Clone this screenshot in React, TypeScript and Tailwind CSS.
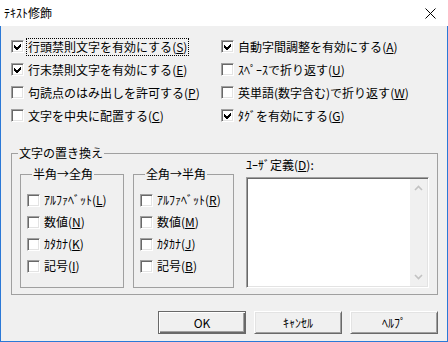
import React from "react";

type Item = { text: string; key: string; tail?: string; checked?: boolean; focus?: boolean };

const topItems: Item[] = [
  { text: "行頭禁則文字を有効にする", key: "S", checked: true, focus: true },
  { text: "自動字間調整を有効にする", key: "A", checked: true },
  { text: "行末禁則文字を有効にする", key: "E", checked: true },
  { text: "ｽﾍﾟｰｽで折り返す", key: "U" },
  { text: "句読点のはみ出しを許可する", key: "P" },
  { text: "英単語(数字含む)で折り返す", key: "W" },
  { text: "文字を中央に配置する", key: "C" },
  { text: "ﾀｸﾞを有効にする", key: "G", checked: true },
];

const toFull: Item[] = [
  { text: "ｱﾙﾌｧﾍﾞｯﾄ", key: "L" },
  { text: "数値", key: "N" },
  { text: "ｶﾀｶﾅ", key: "K" },
  { text: "記号", key: "I" },
];

const toHalf: Item[] = [
  { text: "ｱﾙﾌｧﾍﾞｯﾄ", key: "R" },
  { text: "数値", key: "M" },
  { text: "ｶﾀｶﾅ", key: "J" },
  { text: "記号", key: "B" },
];

function Box({ checked }: { checked?: boolean }) {
  return (
    <span className="flex h-[13px] w-[13px] shrink-0 items-center justify-center border border-t-[#a0a0a0] border-l-[#a0a0a0] border-r-white border-b-white bg-white shadow-[inset_1px_1px_0_#696969,inset_-1px_-1px_0_#e3e3e3]">
      {checked && (
        <svg width="9" height="9" viewBox="0 0 9 9" shapeRendering="crispEdges">
          <polygon points="1,3 3.5,5.5 8,1 8,4 3.5,8.5 1,6" fill="#000" />
        </svg>
      )}
    </span>
  );
}

function Label({ item }: { item: Item }) {
  return (
    <>
      {item.text}(<u className="underline-offset-[1px]">{item.key}</u>)
    </>
  );
}

function Check({ item, h }: { item: Item; h: string }) {
  return (
    <div className={`flex items-center ${h}`}>
      <Box checked={item.checked} />
      <span
        className={`ml-[4px] whitespace-nowrap leading-[14px] ${
          item.focus ? "outline-1 outline-offset-1 outline-dotted outline-black" : ""
        }`}
      >
        <Label item={item} />
      </span>
    </div>
  );
}

function Group({ title, items, w }: { title: string; items: Item[]; w: string }) {
  return (
    <fieldset className={`${w} mt-[5px] h-[122px] shrink-0 border border-[#a0a0a0] pl-[6px] pt-[7px]`}>
      <legend className="ml-[5px] px-[1px] leading-[16px]">{title}</legend>
      {items.map((it) => (
        <Check key={it.key} item={it} h="h-[22px]" />
      ))}
    </fieldset>
  );
}

function Button({ children, primary }: { children: React.ReactNode; primary?: boolean }) {
  return (
    <button
      className={`flex h-[23px] w-[88px] items-center justify-center bg-[#f0f0f0] text-[12px] leading-none ${
        primary
          ? "border border-[#696969] shadow-[inset_1px_1px_0_#fff,inset_-1px_-1px_0_#696969,inset_-2px_-2px_0_#a0a0a0]"
          : "border border-t-white border-l-white border-r-[#696969] border-b-[#696969] shadow-[inset_1px_1px_0_#e3e3e3,inset_-1px_-1px_0_#a0a0a0]"
      }`}
    >
      {children}
    </button>
  );
}

export default function App() {
  return (
    <div className="flex h-[342px] w-[448px] flex-col bg-white font-['Noto_Sans_CJK_JP','Liberation_Sans',sans-serif] text-[12px] text-black">
      <div className="flex h-[26px] shrink-0 items-center justify-between pl-[4px] pr-[12px]">
        <span className="leading-[14px]">ﾃｷｽﾄ修飾</span>
        <svg width="11" height="11" viewBox="0 0 11 11">
          <path d="M0.5 0.5 L10.5 10.5 M10.5 0.5 L0.5 10.5" stroke="#000" strokeWidth="1" />
        </svg>
      </div>

      <div className="flex flex-1 flex-col border-x border-b border-[#2b79d7] bg-[#f0f0f0] pl-[10px] pr-[9px] pt-[9px]">
        <div className="grid grid-cols-[210px_1fr]">
          {topItems.map((it) => (
            <Check key={it.key} item={it} h="h-[23px]" />
          ))}
        </div>

        <fieldset className="mt-[18px] border border-[#a0a0a0] pb-[6px]">
          <legend className="ml-[6px] px-[1px] leading-[16px]">文字の置き換え</legend>
          <div className="flex items-start pl-[8px]">
            <Group title="半角→全角" items={toFull} w="w-[104px]" />
            <div className="ml-[9px]">
              <Group title="全角→半角" items={toHalf} w="w-[101px]" />
            </div>
            <div className="ml-[12px] -mt-[3px] flex w-[183px] flex-col">
              <span className="leading-[14px]">
                ﾕｰｻﾞ定義(<u className="underline-offset-[1px]">D</u>):
              </span>
              <div className="mt-[5px] flex h-[111px] justify-end border border-t-[#a0a0a0] border-l-[#a0a0a0] border-r-white border-b-white bg-white p-[1px] shadow-[inset_1px_1px_0_#696969,inset_-1px_-1px_0_#e3e3e3]">
                <div className="flex w-[17px] flex-col items-center justify-between bg-[#f0f0f0] py-[6px]">
                  <svg width="9" height="6" viewBox="0 0 9 6">
                    <path d="M1 5 L4.5 1.5 L8 5" fill="none" stroke="#c2c2c2" strokeWidth="1.6" />
                  </svg>
                  <svg width="9" height="6" viewBox="0 0 9 6">
                    <path d="M1 1 L4.5 4.5 L8 1" fill="none" stroke="#c2c2c2" strokeWidth="1.6" />
                  </svg>
                </div>
              </div>
            </div>
          </div>
        </fieldset>

        <div className="mt-[16px] flex justify-end gap-[8px]">
          <Button primary>OK</Button>
          <Button>ｷｬﾝｾﾙ</Button>
          <Button>ﾍﾙﾌﾟ</Button>
        </div>
      </div>
    </div>
  );
}
